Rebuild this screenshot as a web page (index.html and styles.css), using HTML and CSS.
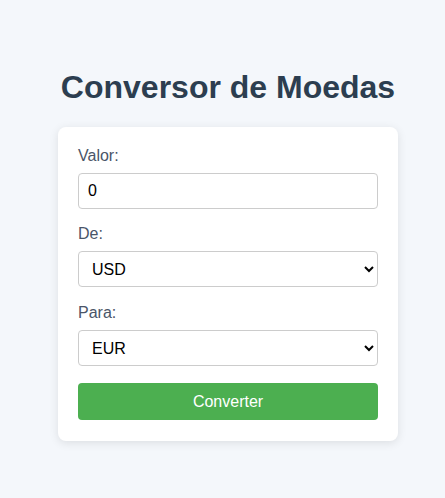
FILE: index.html
```html
<!DOCTYPE html>
<html lang="pt">
<head>
<meta charset="utf-8">
<title>Conversor de Moedas</title>
<link rel="stylesheet" href="styles.css">
</head>
<body>
<main class="page">
  <h1 class="title">Conversor de Moedas</h1>
  <form class="card">
    <div class="group">
      <label class="label" for="valor">Valor:</label>
      <input class="field" id="valor" type="number" value="0">
    </div>
    <div class="group group-mid">
      <label class="label" for="de">De:</label>
      <select class="field select" id="de">
        <option>USD</option>
        <option>EUR</option>
        <option>BRL</option>
      </select>
    </div>
    <div class="group group-last">
      <label class="label" for="para">Para:</label>
      <select class="field select" id="para">
        <option>EUR</option>
        <option>USD</option>
        <option>BRL</option>
      </select>
    </div>
    <button class="btn" type="button">Converter</button>
  </form>
</main>
</body>
</html>
```
FILE: styles.css
```css
* { box-sizing: border-box; }
html, body { margin: 0; padding: 0; }
body {
  background: #f4f7fb;
  font-family: "Liberation Sans", Arial, sans-serif;
  width: 445px;
  height: 498px;
}
.page {
  display: flex;
  flex-direction: column;
  align-items: center;
  padding-top: 66px;
  padding-left: 11px;
}
.title {
  margin: 0 0 19px 0;
  font-size: 32px;
  line-height: 42px;
  font-weight: bold;
  color: #2c3e50;
}
.card {
  width: 340px;
  background: #ffffff;
  border-radius: 8px;
  padding: 20px 20px 21px;
  box-shadow: 0 2px 10px rgba(0, 0, 0, 0.1);
  display: flex;
  flex-direction: column;
}
.group {
  display: flex;
  flex-direction: column;
  margin-bottom: 16px;
}
.group-mid { margin-bottom: 17px; }
.group-last { margin-bottom: 17px; }
.label {
  font-size: 16px;
  line-height: 18px;
  color: #4a5568;
  margin-bottom: 8px;
}
.field {
  height: 36px;
  width: 300px;
  border: 1px solid #cccccc;
  border-radius: 4px;
  padding: 0 9px;
  font-family: "Liberation Sans", Arial, sans-serif;
  font-size: 16px;
  color: #000;
  background: #fff;
}
.select { padding: 0 6px 0 9px; }
.btn {
  height: 37px;
  width: 300px;
  border: none;
  border-radius: 4px;
  background: #4caf50;
  color: #ffffff;
  font-family: "Liberation Sans", Arial, sans-serif;
  font-size: 16px;
  cursor: pointer;
}
```
